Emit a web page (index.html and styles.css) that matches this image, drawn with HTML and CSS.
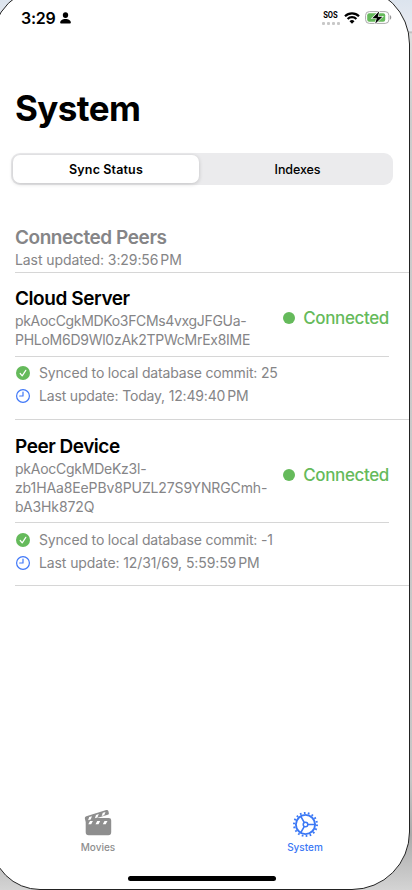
FILE: index.html
```
<!DOCTYPE html>
<html lang="en">
<head>
<meta charset="utf-8">
<title>System</title>
<link rel="stylesheet" href="styles.css">
</head>
<body>
<div class="phone-frame"></div>
<div class="app">
  <header class="status-bar">
    <span class="time">3:29</span>
    <svg class="person" width="11" height="12" viewBox="0 0 11 12"><ellipse cx="5.5" cy="3.1" rx="2.700" ry="2.900"/><path d="M.2 10.400C.2 8.300 2.600 7 5.500 7s5.300 1.300 5.300 3.400c0 .8-.4 1.100-1.200 1.100h-8.200C.6 11.500.2 11.200.2 10.400z"/></svg>
    <div class="signal"><span class="sos">SOS</span><span class="dots"><i></i><i></i><i></i><i></i></span></div>
    <svg class="wifi" width="16" height="12" viewBox="0 0 16 12"><path d="M1 4.200a10 10 0 0 1 14 0M3.600 7a6.300 6.300 0 0 1 8.800 0" fill="none" stroke="#000" stroke-width="2.200"/><path d="M5.500 9.200a3.700 3.700 0 0 1 5 0L8 11.800z"/></svg>
    <svg class="battery" width="27" height="13" viewBox="0 0 27 13"><rect x=".6" y=".6" width="23.300" height="11.800" rx="3.700" fill="#fff" stroke="#aaa"/><path d="M25 4.300c1.700.6 1.700 3.800 0 4.400z" fill="#999"/><rect x="2.200" y="2.200" width="18" height="8.600" rx="2" fill="#65ba5b"/><path d="M14.300.3 7.300 7.200h4.500L10.200 12.700l7.200-7h-4.600z" stroke="#fff" stroke-width="1.300" paint-order="stroke"/></svg>
  </header>
  <h1>System</h1>
  <div class="segmented"><button class="selected">Sync Status</button><button>Indexes</button></div>
  <main>
    <section class="section-head"><h2>Connected Peers</h2><p class="updated">Last updated: 3:29:56<span class="thin"></span>PM</p></section>
    <article class="peer cloud">
      <div class="peer-top">
        <div class="identity"><h3 class="name-cloud">Cloud Server</h3><p class="key"><span class="k1">pkAocCgkMDKo3FCMs4vxgJFGUa-</span><span class="k2">PHLoM6D9Wl0zAk2TPWcMrEx8IME</span></p></div>
        <div class="state"><i></i><span>Connected</span></div>
      </div>
      <div class="details">
        <div class="row"><svg width="14" height="14" viewBox="0 0 14 14"><circle cx="7" cy="7" r="7" fill="#65ba5b"/><path d="m4.200 7.500 2 2.300 3.600-5.500" fill="none" stroke="#fff" stroke-width="1.200" stroke-linecap="round" stroke-linejoin="round"/></svg><span class="sync">Synced to local database commit: 25</span></div>
        <div class="row"><svg width="14" height="14" viewBox="0 0 14 14" fill="none" stroke="#4078f8" stroke-width="1.200"><circle cx="7" cy="7" r="6.400"/><path d="M7 3v4H3.700" stroke-linecap="round" stroke-linejoin="round"/></svg><span class="date1">Last update: Today, 12:49:40<span class="thin"></span>PM</span></div>
      </div>
    </article>
    <article class="peer device">
      <div class="peer-top">
        <div class="identity"><h3 class="name-device">Peer Device</h3><p class="key"><span class="k3">pkAocCgkMDeKz3l-</span><span class="k4">zb1HAa8EePBv8PUZL27S9YNRGCmh-</span><span class="k5">bA3Hk872Q</span></p></div>
        <div class="state"><i></i><span>Connected</span></div>
      </div>
      <div class="details">
        <div class="row"><svg width="14" height="14" viewBox="0 0 14 14"><circle cx="7" cy="7" r="7" fill="#65ba5b"/><path d="m4.200 7.500 2 2.300 3.600-5.500" fill="none" stroke="#fff" stroke-width="1.200" stroke-linecap="round" stroke-linejoin="round"/></svg><span class="sync">Synced to local database commit: -1</span></div>
        <div class="row"><svg width="14" height="14" viewBox="0 0 14 14" fill="none" stroke="#4078f8" stroke-width="1.200"><circle cx="7" cy="7" r="6.400"/><path d="M7 3v4H3.700" stroke-linecap="round" stroke-linejoin="round"/></svg><span class="date2">Last update: 12/31/69, 5:59:59<span class="thin"></span>PM</span></div>
      </div>
    </article>
  </main>
  <nav class="tabs">
    <a class="tab movies"><svg width="28" height="28" viewBox="0 0 28 28"><path d="M2.300 7.200 21.500 1.200c1.500-.4 2.600 0 3 1.300l.3 1.400c.2 1-.1 1.500-1.100 1.800L13 9h11.700c1.700 0 2.500.8 2.500 2.500V23.300c0 2-.9 3-2.900 3H4.700c-2 0-3-1-3-3V13L1 10.200c-.4-1.600 0-2.500 1.300-3z" fill="#8e8e8e"/><path d="m5.200 8 2.800-.8-1.300 3.300-2.600.8zM12 5.900l2.800-.8-1.400 3.300-2.500.8zM18.800 3.800l2.700-.8-1.300 3.300-2.500.8zM6 12h2.900l-1.700 3.200H4.300zM13.200 12h3l-1.700 3.200h-3zM20.500 12h3l-1.800 3.200h-2.900z" fill="#fff"/></svg><span>Movies</span></a>
    <a class="tab system"><svg width="28" height="28" viewBox="0 0 28 28" fill="none" stroke="#3b78f5"><circle cx="14.500" cy="15.500" r="11.500" stroke-width="2" stroke-dasharray="1.700 2.314"/><circle cx="14.500" cy="15.500" r="9.600" stroke-width="1.900"/><circle cx="14.500" cy="15.500" r="2.300" stroke-width="1.500"/><path d="M17 15.500h7.500M13.200 13.300 9.500 6.900M13.200 17.700 9.500 24.100" stroke-width="1.600"/></svg><span>System</span></a>
  </nav>
  <div class="home"></div>
</div>
</body>
</html>
```
FILE: styles.css
```
* { box-sizing: border-box; }
html, body { margin: 0; width: 412px; height: 890px; overflow: hidden; }
body { position: relative; font-family: Inter, "Liberation Sans", sans-serif; color: #000; background: linear-gradient(180deg, #dce4ee 0, #e9ebf1 31px, #b5b5b5 32px, #dedede 34px, #ccc 120px, #c6c6c6 780px, #aaa 835px, #d4d4d4 890px); }
h1, h2, h3, p { margin: 0; }
.phone-frame { position: absolute; left: -9px; top: -14px; width: 419px; height: 904px; background: #fff; border: 1px solid #222; border-radius: 58px 58px 58px 49px; }
.app { position: relative; height: 890px; display: flex; flex-direction: column; }
.status-bar { height: 36px; padding: 0 20px 0 21px; display: flex; align-items: center; }
.time { font-size: 16px; font-weight: 600; letter-spacing: -.25px; width: 39px; }
.signal { width: 17px; margin-left: auto; display: flex; flex-direction: column; align-items: center; gap: 2px; }
.sos { font: 700 8px/8px Roboto, sans-serif; letter-spacing: -.2px; transform: scale(.95, 1.15); }
.dots { display: flex; gap: 2px; }
.dots i { width: 3px; height: 3px; border-radius: 1px; background: #c8c8c8; }
.wifi { margin-left: 5px; margin-top: -1px; }
.battery { margin-left: 5px; margin-top: -1px; }
h1 { margin: 50px 0 0 15px; height: 44px; font-size: 35px; line-height: 44px; font-weight: 700; letter-spacing: -.6px; }
.segmented { margin: 23px 19px 0 11px; height: 32px; padding: 2px; border-radius: 9px; background: #ebebed; display: flex; }
.segmented button { flex: 1; border: 0; padding: 1px 0 0 5px; background: none; font: 500 12.5px/27px Inter, sans-serif; letter-spacing: -.1px; color: #000; }
.segmented .selected { flex: none; width: 186px; padding: 1px 0 0; border-radius: 7px; background: #fff; font-weight: 600; letter-spacing: .14px; box-shadow: 0 1px 4px rgba(0,0,0,.18); }
main { padding-top: 41px; width: 409px; }
.section-head { margin-left: 15px; height: 47px; border-bottom: 1px solid #d6d6d6; color: #858587; }
h2 { font-size: 19px; line-height: 23px; font-weight: 600; letter-spacing: -.44px; }
.updated { font-size: 14px; line-height: 22px; letter-spacing: -.09px; }
.updated, .key, .row { color: #858587; font-size: 14px; white-space: nowrap; }
.thin { display: inline-block; width: 2px; }
.peer { margin-left: 15px; border-bottom: 1px solid #d6d6d6; }
.peer-top { margin-right: 20px; border-bottom: 1px solid #d6d6d6; display: flex; justify-content: space-between; align-items: center; }
.cloud .peer-top { height: 84px; padding-top: 6px; }
.device .peer-top { height: 103px; padding-top: 8px; }
h3 { font-size: 19px; line-height: 24px; font-weight: 600; white-space: nowrap; }
.name-cloud { letter-spacing: -.43px; }
.name-device { letter-spacing: -.48px; }
.key span { display: block; line-height: 19px; height: 19px; }
.k1 { letter-spacing: -.33px; }
.k2 { letter-spacing: -.26px; }
.k3 { letter-spacing: -.25px; }
.k4 { letter-spacing: -.12px; }
.k5 { letter-spacing: -.12px; }
.sync { letter-spacing: -.17px; }
.date1 { letter-spacing: -.18px; }
.date2 { letter-spacing: -.1px; }
.state { color: #65ba5b; font-size: 17px; line-height: 22px; font-weight: 500; letter-spacing: -.37px; display: flex; align-items: center; gap: 8px; }
.state i { width: 12px; height: 12px; border-radius: 50%; background: #65ba5b; }
.details { height: 62px; padding-top: 4px; }
.device .details { padding-top: 5px; }
.row { display: flex; align-items: center; gap: 9px; padding-left: 1px; height: 23px; }
.tabs { position: absolute; left: 0; top: 809px; width: 409px; display: grid; grid-template-columns: 196px 218px; }
.tab { display: flex; flex-direction: column; align-items: center; font-size: 10px; line-height: 14px; font-weight: 500; gap: 3px; }
.movies { color: #8e8e8e; }
.system { color: #3b78f5; }
.home { position: absolute; left: 128px; top: 876px; width: 148px; height: 5px; border-radius: 3px; background: #000; }
```
